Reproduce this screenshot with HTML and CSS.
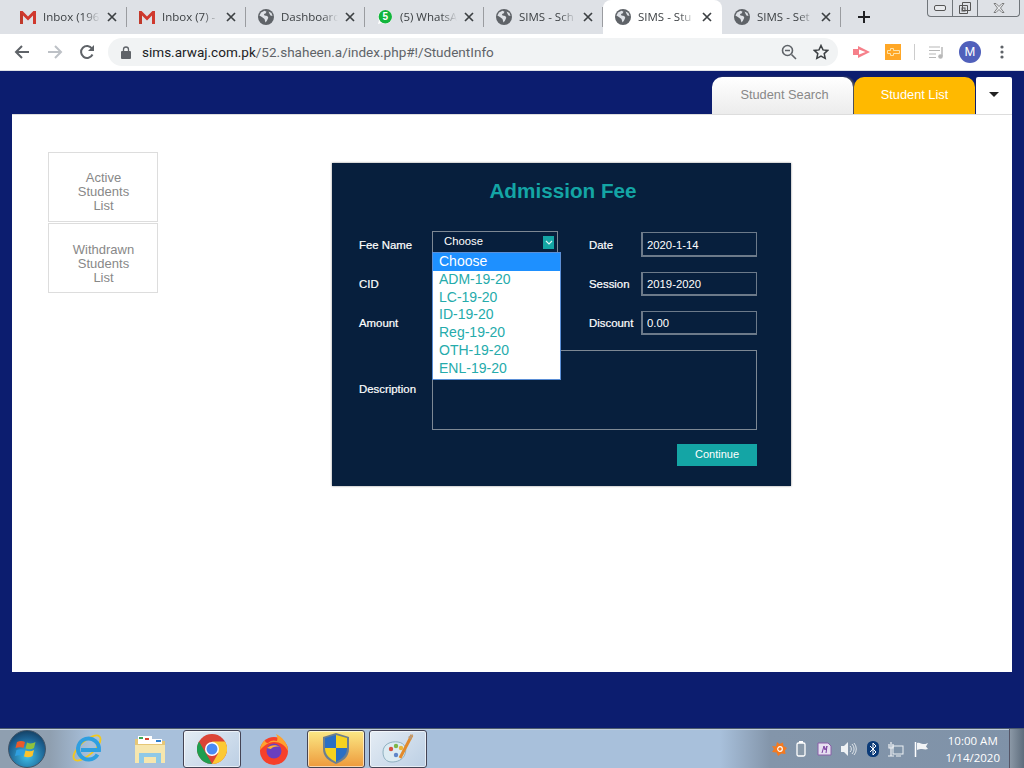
FILE: index.html
```html
<!DOCTYPE html>
<html lang="en">
<head>
    <meta charset="UTF-8">
    <meta name="viewport" content="width=device-width, initial-scale=1.0">
    <title>SIMS - Student Info</title>
    <link rel="stylesheet" href="styles.css">
</head>
<body>
    <svg class="icon-defs" width="0" height="0">
        <defs>
            <symbol id="globe" viewBox="0 0 16 16">
                <circle cx="8" cy="8" r="8" fill="#5f6368"/>
                <path d="M3 3.500l3.500-1.800 2 1-1 1.800-1.600.4.6 1.600 2.800.6 1 1.600-1.400 3-1.400 1.800-1-3.400-2.600-2.200L1.400 6.600z" fill="#dee1e6"/>
                <path d="M10.500 2.500l3 1.500 1 3-2-.6-1-1.600z" fill="#dee1e6"/>
            </symbol>
            <symbol id="gmail" viewBox="0 0 16 14">
                <path d="M0 1h2.600L8 6.600 13.400 1H16v13h-3V5.600L8 10.400 3 5.600V14H0z" fill="#d0392e"/>
                <path d="M3 5.600V14H0V2z" fill="#c0392b"/>
            </symbol>
            <symbol id="close" viewBox="0 0 10 10">
                <path d="M1 1l8 8M9 1L1 9" stroke="#3c4043" stroke-width="1.700" fill="none"/>
            </symbol>
        </defs>
    </svg>

    <div class="tabstrip">
        <div class="browser-tab">
            <svg class="tab-icon" width="16" height="14"><use href="#gmail"/></svg>
            <span class="tab-title">Inbox (196</span>
            <svg class="tab-close" width="10" height="10"><use href="#close"/></svg>
        </div>
        <div class="browser-tab">
            <svg class="tab-icon" width="16" height="14"><use href="#gmail"/></svg>
            <span class="tab-title">Inbox (7) -</span>
            <svg class="tab-close" width="10" height="10"><use href="#close"/></svg>
        </div>
        <div class="browser-tab">
            <svg class="tab-icon" width="16" height="16"><use href="#globe"/></svg>
            <span class="tab-title">Dashboard</span>
            <svg class="tab-close" width="10" height="10"><use href="#close"/></svg>
        </div>
        <div class="browser-tab">
            <svg class="tab-icon" width="16" height="16" viewBox="0 0 16 16">
                <path d="M1 15l1-3.600A7 7 0 1 1 4.600 14z" fill="#fff"/>
                <circle cx="8.300" cy="7.700" r="6.700" fill="#12b53c"/>
                <text x="8.300" y="11.200" class="badge-num">5</text>
            </svg>
            <span class="tab-title">(5) WhatsA</span>
            <svg class="tab-close" width="10" height="10"><use href="#close"/></svg>
        </div>
        <div class="browser-tab">
            <svg class="tab-icon" width="16" height="16"><use href="#globe"/></svg>
            <span class="tab-title">SIMS - Sch</span>
            <svg class="tab-close" width="10" height="10"><use href="#close"/></svg>
        </div>
        <div class="browser-tab active">
            <svg class="tab-icon" width="16" height="16"><use href="#globe"/></svg>
            <span class="tab-title">SIMS - Stu</span>
            <svg class="tab-close" width="10" height="10"><use href="#close"/></svg>
        </div>
        <div class="browser-tab last">
            <svg class="tab-icon" width="16" height="16"><use href="#globe"/></svg>
            <span class="tab-title">SIMS - Set</span>
            <svg class="tab-close" width="10" height="10"><use href="#close"/></svg>
        </div>
        <svg class="new-tab" width="12" height="12" viewBox="0 0 12 12"><path d="M6 0v12M0 6h12" stroke="#202124" stroke-width="2"/></svg>
        <div class="window-controls">
            <div class="win-btn win-min"><svg width="12" height="6" viewBox="0 0 12 6"><rect x=".5" y=".5" width="11" height="5" rx="1.500" fill="#e8eaed" stroke="#555"/></svg></div>
            <div class="win-btn win-max"><svg width="12" height="12" viewBox="0 0 12 12"><path d="M3.500.5h8v8h-8zM.5 3.500h8v8h-8z" fill="none" stroke="#555"/><rect x="3" y="6" width="3" height="3" fill="none" stroke="#555"/></svg></div>
            <div class="win-btn win-close"><svg width="12" height="10" viewBox="0 0 12 10"><path d="M1 .5h2L6 3.500 9 .5h2L7.500 5 11 9.500H9L6 6.500 3 9.500H1L4.500 5z" fill="#e8eaed" stroke="#666" stroke-width=".8"/></svg></div>
        </div>
    </div>

    <div class="toolbar">
        <svg class="nav-btn" width="16" height="16" viewBox="0 0 16 16"><path d="M15 8H2M8 2L2 8l6 6" stroke="#5f6368" stroke-width="2" fill="none"/></svg>
        <svg class="nav-btn" width="16" height="16" viewBox="0 0 16 16"><path d="M1 8h13M8 2l6 6-6 6" stroke="#bdc1c6" stroke-width="2" fill="none"/></svg>
        <svg class="nav-btn" width="16" height="16" viewBox="0 0 16 16"><path d="M13.500 10.500A6 6 0 1 1 13 4.500" stroke="#5f6368" stroke-width="2" fill="none"/><path d="M15 1v6H9z" fill="#5f6368"/></svg>
        <div class="omnibox">
            <svg class="lock" width="10" height="13" viewBox="0 0 10 13"><path d="M2.500 5V3.500a2.500 2.500 0 0 1 5 0V5" stroke="#5f6368" stroke-width="1.300" fill="none"/><rect y="5" width="10" height="8" rx="1" fill="#5f6368"/></svg>
            <span class="url"><b>sims.arwaj.com.pk</b>/52.shaheen.a/index.php#!/StudentInfo</span>
            <svg class="omni-zoom" width="16" height="16" viewBox="0 0 16 16"><circle cx="6.500" cy="6.500" r="5" stroke="#5f6368" stroke-width="1.600" fill="none"/><path d="M10.500 10.500L15 15M4 6.500h5" stroke="#5f6368" stroke-width="1.600"/></svg>
            <svg class="omni-star" width="16" height="16" viewBox="0 0 16 16"><path d="M8 1.500l2 4.400 4.700.5-3.500 3.200 1 4.700L8 12l-4.200 2.300 1-4.700L1.300 6.400 6 5.900z" stroke="#3c4043" stroke-width="1.500" fill="none"/></svg>
        </div>
        <div class="ext-icons">
            <svg width="17" height="12" viewBox="0 0 17 12"><path d="M0 3h5V0l12 6-12 6V9H0z" fill="#f6808a"/><path d="M6 3.500L12.500 6 6 8.500z" fill="#fff"/></svg>
            <div class="ext-orange"><svg width="13" height="8" viewBox="0 0 13 8"><path d="M.5 2.500h3v-2h3v2h6v3h-6v2h-3v-2h-3z" fill="none" stroke="#ffe2a8"/></svg></div>
            <span class="ext-sep"></span>
            <svg width="16" height="13" viewBox="0 0 16 13"><path d="M0 1h11M0 4.500h11M0 8h7M0 11.500h7" stroke="#b8b8b8" stroke-width="1.200"/><path d="M13 1v9" stroke="#b8b8b8" stroke-width="1.500"/><circle cx="11.500" cy="10.500" r="2.300" fill="#b8b8b8"/></svg>
            <div class="avatar">M</div>
            <svg width="4" height="14" viewBox="0 0 4 14"><circle cx="2" cy="2" r="1.600" fill="#5f6368"/><circle cx="2" cy="7" r="1.600" fill="#5f6368"/><circle cx="2" cy="12" r="1.600" fill="#5f6368"/></svg>
        </div>
    </div>

    <div class="page">
        <div class="page-tabs">
            <div class="page-tab search-tab">Student Search</div>
            <div class="page-tab list-tab">Student List</div>
            <div class="page-tab caret-tab"><span class="caret"></span></div>
        </div>
        <div class="card">
            <div class="side-menu">
                <div class="side-item">Active<br>Students<br>List</div>
                <div class="side-item">Withdrawn<br>Students<br>List</div>
            </div>
            <div class="dialog">
                <h2 class="dialog-title">Admission Fee</h2>
                <div class="fee-form">
                    <label class="fee-label">Fee Name</label>
                    <div class="fee-select">
                        <div class="select-box">Choose<span class="select-arrow"><svg width="8" height="5" viewBox="0 0 8 5"><path d="M1 1l3 3 3-3" stroke="#d8f3f3" stroke-width="1.200" fill="none"/></svg></span></div>
                        <ul class="select-list">
                            <li class="selected">Choose</li>
                            <li>ADM-19-20</li>
                            <li>LC-19-20</li>
                            <li>ID-19-20</li>
                            <li>Reg-19-20</li>
                            <li>OTH-19-20</li>
                            <li>ENL-19-20</li>
                        </ul>
                    </div>
                    <label class="fee-label second">Date</label>
                    <input class="fee-input tall" type="text" value="2020-1-14">

                    <label class="fee-label up">CID</label>
                    <input class="fee-input" type="text">
                    <label class="fee-label second up">Session</label>
                    <input class="fee-input" type="text" value="2019-2020">

                    <label class="fee-label up">Amount</label>
                    <input class="fee-input" type="text">
                    <label class="fee-label second up">Discount</label>
                    <input class="fee-input" type="text" value="0.00">

                    <label class="fee-label up">Description</label>
                    <textarea class="fee-text"></textarea>
                </div>
                <div class="dialog-actions"><button class="continue-btn">Continue</button></div>
            </div>
        </div>
    </div>

    <div class="taskbar">
        <div class="start-orb">
            <svg width="24" height="24" viewBox="0 0 24 24">
                <path d="M2 5c3-1.500 6-1 8 0l-1.500 6c-2-1-5-1-8 0z" fill="#ea5a2a"/>
                <path d="M12 5.500c3 1.500 6 1 8.500-.5L19 11c-2.500 1.500-5.500 1.500-8.500.5z" fill="#8fc23d"/>
                <path d="M0 13c3-1 6-1 8 0l-1.500 6c-2-1-5-1-8 0z" transform="translate(1.500)" fill="#2f9fe0"/>
                <path d="M10.500 13.500c3 1 6 1 8.500-.5l-1.500 6c-2.500 1.500-5.500 1.500-8.500.5z" fill="#fcc32b"/>
            </svg>
        </div>
        <div class="task-item">
            <svg width="32" height="32" viewBox="0 0 32 32">
                <ellipse cx="15" cy="15" rx="17" ry="7" transform="rotate(-42 15 15)" fill="none" stroke="#f2c81e" stroke-width="1.800"/>
                <path d="M25.500 21.500A10.500 10.500 0 1 1 27 17H9" stroke="#2f9fe0" stroke-width="4" fill="none"/>
            </svg>
        </div>
        <div class="task-item">
            <svg width="32" height="32" viewBox="0 0 32 32">
                <path d="M1 6h10l2 2h18v22H1z" fill="#e6c777"/>
                <rect x="4" y="3" width="14" height="8" fill="#fff"/><rect x="5" y="4" width="4" height="2" fill="#3aa655"/><rect x="11" y="5" width="4" height="2" fill="#d8432f"/>
                <rect x="17" y="6" width="11" height="5" fill="#fff"/><rect x="22" y="7" width="5" height="2" fill="#2e7fd0"/>
                <path d="M1 12h30v18H1z" fill="#f6e6ae"/>
                <path d="M5 20h22v10h-5v-6H10v6H5z" fill="#8fc9e6"/>
            </svg>
        </div>
        <div class="task-item pinned">
            <svg width="30" height="30" viewBox="0 0 30 30">
                <circle cx="15" cy="15" r="15" fill="#db4437"/>
                <path d="M15 30A15 15 0 0 1 2 7.500L9 19.500z" fill="#1e9e4f"/>
                <path d="M15 30a15 15 0 0 0 13-22.500H15l6 12z" fill="#fcc934"/>
                <circle cx="15" cy="15" r="7" fill="#fff"/>
                <circle cx="15" cy="15" r="5.500" fill="#4a8af4"/>
            </svg>
        </div>
        <div class="task-item">
            <svg width="30" height="32" viewBox="0 0 30 32">
                <circle cx="15" cy="18" r="14" fill="#f6402a"/>
                <path d="M1 17C2 11 4 9 6 7c0 2 1 3 3 3 3-3 6-3 9-2 1-3 0-5-1-7 6 3 12 9 12 17-3-6-8-9-14-9S5 13 1 17z" fill="#ffa22e"/>
                <circle cx="15" cy="18" r="7.500" fill="#6a3fc0"/>
                <path d="M8 15c3-3 9-4 13-1-4-1-8 0-9 2z" fill="#ffb32e"/>
            </svg>
        </div>
        <div class="task-item pinned uac">
            <svg width="26" height="31" viewBox="0 0 26 31">
                <path d="M13 0l13 4v12c0 8-6 12-13 15C6 28 0 24 0 16V4z" fill="#6d7f8f"/>
                <path d="M13 2v13H2V5z" fill="#2a6fc4"/>
                <path d="M13 2l11 3v10H13z" fill="#f6d21f"/>
                <path d="M2 15h11v14C7 26 2 22 2 15z" fill="#f6d21f"/>
                <path d="M13 15h11c0 7-5 11-11 14z" fill="#2a6fc4"/>
            </svg>
        </div>
        <div class="task-item pinned">
            <svg width="32" height="30" viewBox="0 0 32 30">
                <path d="M1 18C1 10 9 7 16 8c7 1 9 7 7 12-2 6-8 8-13 8-6 0-9-4-9-10z" fill="#dcebf2" stroke="#8fb0c0"/>
                <circle cx="9" cy="15" r="2.200" fill="#d8503f"/><circle cx="14" cy="12" r="2.200" fill="#7cb54a"/><circle cx="19" cy="14" r="2.200" fill="#e9b63a"/><circle cx="14" cy="21" r="2.200" fill="#5e86c8"/>
                <path d="M30 1L18 24" stroke="#e28a2b" stroke-width="3"/>
                <path d="M31 0l-5 3 3 3z" fill="#b79a7a"/>
            </svg>
        </div>
        <div class="tray">
            <svg width="15" height="15" viewBox="0 0 15 15"><path d="M5 1l2.500 2L11 1.500 11.500 5 15 7l-2 2.500.5 3.500-4-.5L6 15l-1.500-3.500L0 11l2-3-2-3 4 .5z" fill="#f47a20"/><circle cx="8" cy="8" r="2.300" fill="none" stroke="#fff" stroke-width="1.200"/></svg>
            <svg width="10" height="16" viewBox="0 0 10 16"><rect x="1" y="2" width="8" height="13" rx="1.500" fill="#8a9aaa" stroke="#fff" stroke-width="1.300"/><rect x="3" y="0" width="4" height="2" fill="#fff"/></svg>
            <svg width="16" height="16" viewBox="0 0 16 16"><path d="M2 2h10l3 3v9H2z" fill="#e6dff0" stroke="#8a5ea8"/><path d="M6 12l2-7 1 4 2-4-1 7" stroke="#7b3fa0" fill="none"/></svg>
            <svg width="16" height="14" viewBox="0 0 16 14"><path d="M0 4h3l4-4v14l-4-4H0z" fill="#eef1f4"/><path d="M9 4a4 4 0 0 1 0 6M11 2a7 7 0 0 1 0 10M13 1a9 9 0 0 1 0 12" stroke="#dfe5ea" fill="none"/></svg>
            <svg width="12" height="16" viewBox="0 0 12 16"><rect width="12" height="16" rx="5.500" fill="#0a3a78"/><path d="M3 5l6 6-3 3V2l3 3-6 6" stroke="#fff" fill="none"/></svg>
            <svg width="16" height="16" viewBox="0 0 16 16"><rect x="5" y="5" width="10" height="8" fill="#7f93a8" stroke="#eef1f4"/><path d="M3 1v14M1 3v4h4V3M0 15h6M8 15h5" stroke="#eef1f4" stroke-width="1.200" fill="none"/></svg>
            <svg width="16" height="16" viewBox="0 0 16 16"><path d="M1.500 1v15" stroke="#fff" stroke-width="1.500"/><path d="M3 2c3-1 4 1 6 1s3 0 5-1l-2 3.500L14 8c-3 1-4 0-6 0s-3 0-5 1z" fill="#f2f4f6"/></svg>
            <div class="clock">10:00 AM<br>1/14/2020</div>
        </div>
        <div class="show-desktop"></div>
    </div>
</body>
</html>
```

FILE: styles.css
```css
body { margin: 0; padding: 0; width: 1024px; height: 768px; overflow: hidden; font-family: "Liberation Sans", Arial, sans-serif; background-color: #fff; }
.icon-defs { position: absolute; }

/* browser chrome */
.tabstrip { display: flex; align-items: center; height: 34px; padding-left: 8px; background-color: #dee1e6; position: relative; }
.browser-tab { display: flex; align-items: center; box-sizing: border-box; width: 119px; height: 34px; padding-left: 12px; border-right: 1px solid #9a9ca0; position: relative; }
.browser-tab::after { content: ""; position: absolute; right: -1px; top: 0; width: 1px; height: 7px; background-color: #dee1e6; }
.browser-tab::before { content: ""; position: absolute; right: -1px; bottom: 0; width: 1px; height: 7px; background-color: #dee1e6; }
.browser-tab.active { background-color: #fff; border-right: 0; border-radius: 8px 8px 0 0; }
.browser-tab.active::after, .browser-tab.active::before { display: none; }
.tab-icon { flex: none; }
.badge-num { fill: #fff; font-family: "Liberation Sans", sans-serif; font-size: 10px; font-weight: bold; text-anchor: middle; }
.tab-title { width: 57px; margin-left: 7px; margin-top: -2px; white-space: nowrap; font-family: "Open Sans", sans-serif; font-size: 11.5px; color: #3c4043; -webkit-mask-image: linear-gradient(to right, #000 72%, transparent); mask-image: linear-gradient(to right, #000 72%, transparent); }
.tab-close { flex: none; margin-left: 7px; }
.new-tab { margin-left: 17px; }
.window-controls { display: flex; position: absolute; top: 0; right: 4px; height: 16px; border: 1px solid #70757a; border-top: 0; border-radius: 0 0 4px 4px; }
.win-btn { display: flex; align-items: center; justify-content: center; height: 16px; border-right: 1px solid #70757a; }
.win-min { width: 24px; }
.win-max { width: 24px; }
.win-close { width: 41px; border-right: 0; }

.toolbar { display: flex; align-items: center; height: 36px; padding-left: 14px; background-color: #fff; border-bottom: 1px solid #dee1e6; }
.nav-btn { flex: none; margin-right: 16.500px; }
.omnibox { display: flex; align-items: center; flex: none; width: 730px; height: 28px; margin-left: -3.500px; border-radius: 14px; background-color: #f1f3f4; }
.lock { margin-left: 13px; }
.url { margin-left: 11px; flex: 1; font-family: Roboto, sans-serif; font-size: 13.540px; color: #5f6368; white-space: nowrap; }
.url b { font-weight: normal; color: #202124; }
.omni-zoom { margin-right: 16px; }
.omni-star { margin-right: 9px; }
.ext-icons { display: flex; align-items: center; flex: 1; padding-left: 15px; gap: 15px; }
.ext-orange { display: flex; align-items: center; justify-content: center; width: 16px; height: 16px; background-color: #ffa726; }
.ext-sep { width: 1px; height: 16px; margin: 0 -1px 0 -2px; background-color: #ccc; }
.avatar { width: 22px; height: 22px; margin: 0 4px 0 -1px; border-radius: 50%; background-color: #5060bb; color: #fff; font-size: 13px; line-height: 22px; text-align: center; }

/* page */
.page { height: 657px; padding: 0 12px; background-color: #0c1d6f; display: flex; flex-direction: column; }
.page-tabs { display: flex; justify-content: flex-end; height: 37px; padding-top: 6px; }
.page-tab { display: flex; align-items: center; justify-content: center; padding-bottom: 2px; box-sizing: border-box; font-size: 12.800px; }
.search-tab { width: 141px; padding-left: 4px; border-radius: 10px 10px 0 0; background: linear-gradient(#fff, #ececec); color: #888; box-shadow: 2px 0 2px #555; }
.list-tab { width: 121px; margin-left: 1px; border-radius: 10px 10px 0 0; background-color: #ffb900; color: #fff; }
.caret-tab { width: 36px; margin-left: 1px; border-radius: 2px 2px 0 0; background-color: #fff; }
.caret { border-top: 5px solid #222; border-left: 5px solid transparent; border-right: 5px solid transparent; }
.card { display: flex; align-items: flex-start; height: 558px; background-color: #fff; border-top: 1px solid #ddd; box-sizing: border-box; }
.side-menu { width: 110px; margin: 37px 0 0 36px; }
.side-item { box-sizing: border-box; height: 70px; margin-bottom: 1px; padding: 19px 0 0 1px; border: 1px solid #ddd; color: #888; font-size: 13px; line-height: 14px; text-align: center; }
.side-item:first-child { padding-top: 18px; }
.dialog { box-sizing: border-box; width: 459px; height: 323px; margin: 48px 0 0 174px; padding: 16px 34px 0 27px; background-color: #071f3d; box-shadow: 0 0 2px #888; }
.dialog-title { margin: 0 0 29px; color: #14a5a5; font-size: 20.700px; line-height: 24px; text-align: center; position: relative; left: 5px; }
.fee-form { display: grid; grid-template-columns: 73px 126px 31px 52px 116px; grid-template-rows: 26px 25px 25px 80px; row-gap: 14px; align-items: center; }
.fee-form .second { grid-column: 4; }
.fee-form label:not(.second) { grid-column: 1; }
.fee-label { color: #fff; font-size: 11.400px; font-weight: normal; -webkit-text-stroke: 0.2px #fff; }
.fee-label.up { padding-bottom: 2px; }
.fee-input { box-sizing: border-box; align-self: start; width: 100%; height: 24px; padding: 1px 4px 0; border: 2px solid #6c7a8a; border-width: 1px 1px 2px 2px; background-color: transparent; color: #fff; font-family: "Liberation Sans", sans-serif; font-size: 11.300px; outline: 0; }
.fee-input.tall { height: 25px; padding-top: 2px; }
.fee-text { grid-column: 2 / 6; box-sizing: border-box; width: 100%; height: 80px; border: 1px solid #7d8894; background-color: transparent; resize: none; }
.fee-select { position: relative; align-self: start; height: 25px; }
.select-box { display: flex; align-items: center; box-sizing: border-box; height: 22px; margin-top: -1px; padding: 0 0 2px 11px; border: 1px solid #7d8894; color: #fff; font-size: 11.300px; position: relative; }
.select-arrow { display: flex; align-items: center; justify-content: center; position: absolute; right: 3px; top: 4px; width: 11px; height: 13px; background-color: #14a5a5; }
.select-list { position: absolute; left: 0; top: 20px; z-index: 5; box-sizing: border-box; width: 129px; margin: 0; padding: 0 0 1px; border: 1px solid #5b8fd6; background-color: #fff; list-style: none; }
.select-list li { height: 17.800px; padding-left: 6px; color: #25abab; font-size: 14px; line-height: 17.800px; }
.select-list li.selected { background-color: #1e90ff; color: #fff; }
.dialog-actions { display: flex; justify-content: flex-end; margin-top: 14px; }
.continue-btn { width: 80px; height: 22px; padding: 0 0 2px; border: 0; background-color: #14a5a5; color: #fff; font-family: "Liberation Sans", sans-serif; font-size: 11px; }

/* windows taskbar */
.taskbar { display: flex; align-items: center; box-sizing: border-box; height: 40px; border-top: 1px solid #4d5c6e; background: linear-gradient(to right, #8f9fb0 0, #8f9fb0 50px, #a8c0db 90px, #a8c0db 720px, #8395aa 770px, #7f92a8 100%); box-shadow: inset 0 1px 0 #c3d0de; }
.start-orb { display: flex; align-items: center; justify-content: center; box-sizing: border-box; flex: none; width: 38px; height: 38px; margin: 0 13px 0 8px; border-radius: 50%; background: radial-gradient(circle at 50% 70%, #3fc0ea, #1c5f8f 60%, #0e2a44); border: 1px solid #405468; }
.task-item { display: flex; align-items: center; justify-content: center; box-sizing: border-box; flex: none; width: 58px; height: 38px; margin-right: 4px; }
.task-item.pinned { border: 1px solid #445; border-radius: 3px; background: linear-gradient(135deg, #e4ecf4, #bccfe4); box-shadow: inset 0 0 0 1px rgba(255,255,255,0.6); }
.task-item.uac { background: linear-gradient(#fbe985, #ee9a3c); }
.tray { display: flex; align-items: center; gap: 9.500px; margin-left: auto; padding-right: 9px; }
.clock { margin-left: 6.500px; color: #fff; font-family: "Open Sans", sans-serif; font-size: 11.500px; line-height: 17px; text-align: center; }
.show-desktop { flex: none; width: 14px; height: 39px; border-left: 1px solid #556; background: linear-gradient(to right, #8b98a6, #5d6c7c); }
```
